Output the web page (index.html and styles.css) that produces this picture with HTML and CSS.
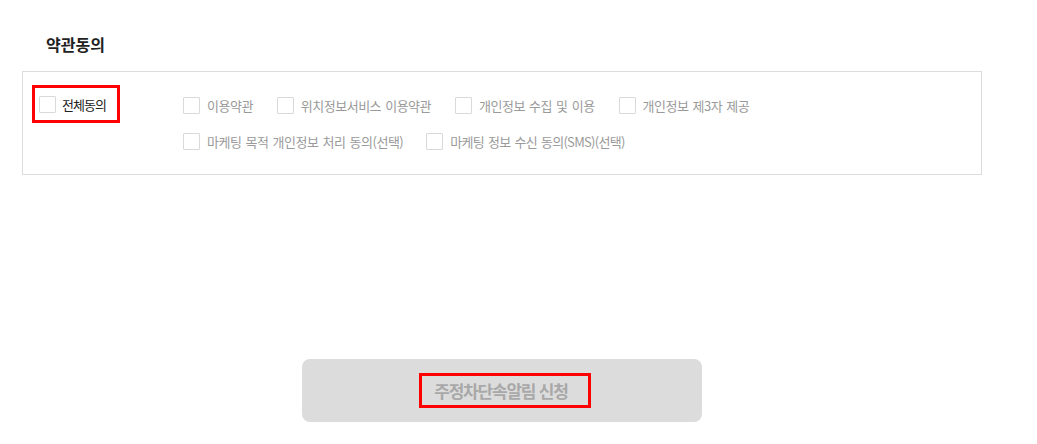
FILE: index.html
```html
<!DOCTYPE html>
<html lang="ko">
<head>
<meta charset="utf-8">
<title>약관동의</title>
<link rel="stylesheet" href="styles.css">
</head>
<body>
<div class="page">
  <section class="terms">
    <h2 class="terms-title">약관동의</h2>
    <div class="terms-box">
      <label class="all-agree">
        <input type="checkbox" class="cb">
        <span class="all-text">전체동의</span>
      </label>
      <div class="options">
        <div class="opt-row">
          <label class="opt"><input type="checkbox" class="cb"><span>이용약관</span></label>
          <label class="opt"><input type="checkbox" class="cb"><span>위치정보서비스 이용약관</span></label>
          <label class="opt"><input type="checkbox" class="cb"><span>개인정보 수집 및 이용</span></label>
          <label class="opt"><input type="checkbox" class="cb"><span>개인정보 제3자 제공</span></label>
        </div>
        <div class="opt-row">
          <label class="opt"><input type="checkbox" class="cb"><span>마케팅 목적 개인정보 처리 동의(선택)</span></label>
          <label class="opt"><input type="checkbox" class="cb"><span class="narrow">마케팅 정보 수신 동의(SMS)(선택)</span></label>
        </div>
      </div>
    </div>
    <div class="actions">
      <button type="button" class="submit-btn"><span class="submit-text">주정차단속알림 신청</span></button>
    </div>
  </section>
</div>
</body>
</html>
```

FILE: styles.css
```css
* { box-sizing: border-box; }

html, body {
  margin: 0;
  padding: 0;
  background: #fff;
}

body {
  font-family: "Noto Sans CJK KR", "Noto Sans", sans-serif;
  color: #222;
}

.page {
  padding-top: 32px;
}

.terms {
  margin-left: 22px;
  width: 960px;
}

.terms-title {
  margin: 0 0 15px;
  padding-left: 24px;
  font-size: 16px;
  line-height: 24px;
  font-weight: 700;
  letter-spacing: 0;
  color: #222;
}

.terms-box {
  display: flex;
  align-items: flex-start;
  border: 1px solid #dcdcdc;
  padding: 14px 0 15px 9px;
}

.cb {
  appearance: none;
  -webkit-appearance: none;
  margin: 0;
  width: 17px;
  height: 17px;
  flex: none;
  border: 1px solid #d9d9d9;
  border-radius: 1px;
  background: #fff;
}

.all-agree {
  display: flex;
  align-items: center;
  gap: 6px;
  width: 88px;
  height: 38px;
  margin-top: -1px;
  padding: 1px 0 0 4px;
  border: 3px solid #ff0000;
}

.all-text {
  font-size: 13px;
  letter-spacing: -1px;
  color: #222;
}

.options {
  margin-left: 63px;
  padding-top: 1px;
}

.opt-row {
  display: flex;
  align-items: center;
  gap: 23px;
  height: 36px;
}

.opt-row:first-child {
  gap: 24px;
}

.opt {
  display: flex;
  align-items: center;
  gap: 7px;
  font-size: 13px;
  letter-spacing: -0.5px;
  word-spacing: 1px;
  color: #9a9a9a;
  white-space: nowrap;
}

.narrow {
  letter-spacing: -0.7px;
}

.actions {
  display: flex;
  justify-content: center;
  margin-top: 184px;
}

.submit-btn {
  width: 400px;
  height: 63px;
  border: 0;
  border-radius: 8px;
  background: #dcdcdc;
  display: flex;
  align-items: center;
  justify-content: center;
  padding: 0 0 0 6px;
  font-family: inherit;
}

.submit-text {
  display: flex;
  align-items: center;
  height: 35px;
  padding: 0 20px 0 12px;
  border: 3px solid #ff0000;
  font-size: 17px;
  font-weight: 700;
  letter-spacing: -1.2px;
  color: #a8a8a8;
}
```
